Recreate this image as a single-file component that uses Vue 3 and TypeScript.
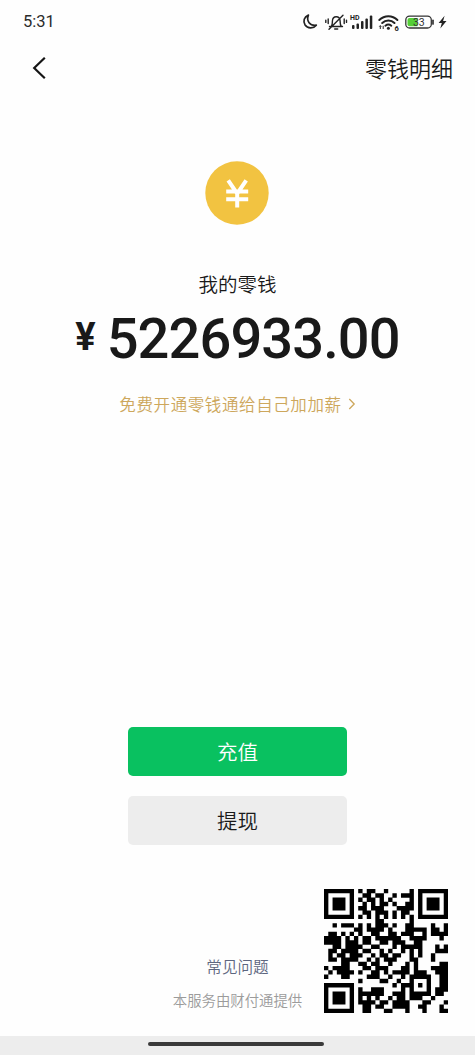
<script setup lang="ts">
const balance: string = '5226933.00'

// One string per module row; '#' is a dark module.
const qrRows: string[] = [
  '#######.#.##..#.....#.#######',
  '#.....#..##.##..#.###.#.....#',
  '#.###.#.#.##.#.#....#.#.###.#',
  '#.###.#..#.#.##.#..##.#.###.#',
  '#.###.#.##.###...####.#.###.#',
  '#.....#..##.###.#.##..#.....#',
  '#######.#.#.#.#.#.#.#.#######',
  '............##......#........',
  '..#.###.#.#.###.#..##....#..#',
  '.......##.####.#...#####.##.#',
  '.##.#.#.#..##..##.###..#.####',
  '####.#.#.##.######..####...#.',
  '####.###.##..##.###..##......',
  '..##.####..##...#.#####...#.#',
  '.##.####.##..#.#..#.#.#...###',
  '.#.##.###..#.##.##..#.#..#...',
  '.##.####..#.#.###...##...#...',
  '....##..##.##..#...#.#.....##',
  '#.####...##.###...##.#...####',
  '.#.####.#..##.#.####.###..###',
  '#...##....###..#..#.#####..##',
  '........#....##..#..#...#..##',
  '#######.........#.###.#.#..##',
  '#.....#.#..###....#.#...#.###',
  '#.###.#.######..###.#####.##.',
  '#.###.#.#.#.#..#.##.###..#...',
  '#.###.#.####.##.####...##...#',
  '#.....#..##.##..####..##...#.',
  '#######..##...##...#...#...##',
]

const qrPath: string = qrRows
  .map((row, y) =>
    Array.from(row)
      .map((cell, x) => (cell === '#' ? `M${x} ${y}h1.02v1.02h-1.02z` : ''))
      .join(''),
  )
  .join('')
</script>

<template>
  <div class="screen">
    <header class="status">
      <span class="time">5:31</span>
      <svg class="status-icons" width="150" height="22" viewBox="0 0 150 22" fill="none">
        <path d="M8.4 4.1C4 5.9 2.8 10.3 5.1 14c2.3 3.5 8.1 4.1 11.2.2C9.9 15 6 10 8.4 4.1Z" stroke="#222" stroke-width="1.7" stroke-linejoin="round" />
        <g stroke="#222" stroke-width="1.4" stroke-linecap="round">
          <path d="M29.5 15.5h13M31.5 15c1-1.6.8-3 .9-5 .3-5.7 7.3-5.7 7.7-.2.1 2.1 0 3.6 1 5.2M34.7 18h3M29 18.3 43 4.2M28.2 8v4.6M25.8 9.2v2.2M44.2 8v4.6M46.5 9.2v2.2" />
        </g>
        <text x="50" y="8.5" class="hd">HD</text>
        <g fill="#222">
          <rect x="52" y="14" width="2.5" height="4" rx="1" />
          <rect x="56.5" y="12.5" width="2.5" height="5.5" rx="1" />
          <rect x="61" y="10" width="2.5" height="8" rx="1" />
          <rect x="65.4" y="7.4" width="2.5" height="10.6" rx="1" />
          <rect x="69.8" y="4.5" width="2.5" height="13.5" rx="1" />
        </g>
        <g stroke="#222" stroke-width="2" stroke-linecap="round">
          <path d="M79.3 9c5.2-5.1 13-5.1 18.1 0M82.2 12c3.5-3.3 8.9-3.3 12.3 0M85.4 14.7c1.8-1.4 4.1-1.4 5.9 0" />
        </g>
        <circle cx="88.4" cy="17.2" r="1.5" fill="#222" />
        <path d="M80.3 18v-3.2m-1 .8 1-1 1 1M83.2 14.8V18" stroke="#222" stroke-width="1" />
        <text x="94.5" y="19.5" class="six">6</text>
        <rect x="105.8" y="5.2" width="25.5" height="11.8" rx="3.8" stroke="#333" stroke-width="1.3" />
        <path d="M109.5 7h8v8.2h-8a2 2 0 0 1-2-2V9a2 2 0 0 1 2-2Z" fill="#55cf37" />
        <path d="M133 9.3v3.6" stroke="#333" stroke-width="1.7" stroke-linecap="round" />
        <text x="118.8" y="15" text-anchor="middle" class="level">33</text>
        <path d="m144.6 4.7-6 7.3h3.2l-1.5 5.6 6.2-7.5h-3.4Z" fill="#222" />
      </svg>
    </header>

    <nav class="nav">
      <svg class="back" width="16" height="24" viewBox="0 0 16 24" fill="none">
        <path d="M12.8 1.8 2.2 12l10.6 10.2" stroke="#151515" stroke-width="2.2" />
      </svg>
      <span class="nav-title">零钱明细</span>
    </nav>

    <main class="content">
      <svg class="coin" width="64" height="64" viewBox="0 0 64 64" fill="none">
        <circle cx="32" cy="32" r="31.7" fill="#f2c341" />
        <path d="m23.2 19.3 9 13.3 9-13.3M32.2 31.5V46.5M21.2 30.6h22M21.2 38.2h22" stroke="#fff" stroke-width="4" />
      </svg>
      <div class="label">我的零钱</div>
      <div class="amount">
        <span class="yen">¥</span>
        <span class="value">{{ balance }}</span>
      </div>
      <div class="promo">
        <span>免费开通零钱通给自己加加薪</span>
        <svg width="8" height="12" viewBox="0 0 8 12" fill="none">
          <path d="m1.3 1 4.9 5-4.9 5" stroke="#cda75c" stroke-width="1.3" />
        </svg>
      </div>
    </main>

    <div class="actions">
      <button class="btn primary">充值</button>
      <button class="btn">提现</button>
    </div>

    <footer class="footer">
      <div class="faq">常见问题</div>
      <div class="provider">本服务由财付通提供</div>
      <svg class="qr" viewBox="0 0 29 29">
        <path :d="qrPath" fill="#000" />
      </svg>
    </footer>

    <div class="home"><div class="pill"></div></div>
  </div>
</template>

<style>
body {
  margin: 0;
  background: #fefefe;
}
</style>

<style scoped>
.screen {
  box-sizing: border-box;
  width: 475px;
  height: 1055px;
  display: flex;
  flex-direction: column;
  overflow: hidden;
  background: #fefefe;
  color: #191919;
  font-family: "Noto Sans CJK SC", sans-serif;
  font-weight: 350;
}
.status {
  height: 44px;
  display: flex;
  justify-content: space-between;
  align-items: center;
  padding: 0 25px 0 23px;
}
.time {
  font: 400 16.5px/20px Roboto, sans-serif;
  color: #2b2b2b;
}
.hd {
  font: 700 7px Roboto, sans-serif;
  fill: #222;
}
.six {
  font: 700 7.5px Roboto, sans-serif;
  fill: #222;
}
.level {
  font: 400 10.5px Roboto, sans-serif;
  fill: #333;
}
.nav {
  height: 48px;
  display: flex;
  justify-content: space-between;
  align-items: center;
  padding: 0 22px 0 32px;
}
.nav-title {
  margin-bottom: 2px;
  font-size: 22px;
  line-height: 30px;
}
.content {
  display: flex;
  flex-direction: column;
  align-items: center;
  padding-top: 69px;
}
.coin {
  display: block;
  margin-right: 1px;
}
.label {
  margin-top: 44px;
  font-size: 19.5px;
  line-height: 30px;
}
.amount {
  height: 60px;
  margin-top: 10px;
  display: flex;
  align-items: center;
  font-family: Roboto, sans-serif;
  line-height: 60px;
}
.yen {
  margin-right: 11px;
  font-size: 38px;
  font-weight: 700;
  line-height: 52px;
  height: 56px;
}
.value {
  font-size: 56px;
  font-weight: 500;
  letter-spacing: -0.9px;
}
.promo {
  margin-top: 21px;
  display: flex;
  align-items: center;
  gap: 6px;
  font-size: 16.5px;
  letter-spacing: 0.6px;
  line-height: 28px;
  color: #cda75c;
}
.actions {
  margin-top: 309px;
  display: flex;
  flex-direction: column;
  align-items: center;
  gap: 20px;
}
.btn {
  width: 219px;
  height: 49px;
  padding: 0;
  border: 0;
  border-radius: 5px;
  background: #ededed;
  color: #191919;
  font-family: inherit;
  font-weight: inherit;
  font-size: 20.5px;
  line-height: 49px;
}
.primary {
  background: #09c160;
  color: #fff;
}
.footer {
  position: relative;
  flex: 1;
  display: flex;
  flex-direction: column;
  align-items: center;
  padding-top: 108px;
}
.faq {
  font-size: 15.6px;
  line-height: 26px;
  color: #5d667f;
}
.provider {
  margin-top: 8px;
  font-size: 14.4px;
  line-height: 26px;
  color: #9b9b9b;
}
.qr {
  position: absolute;
  right: 27px;
  bottom: 23px;
  width: 124px;
  height: 124px;
}
.home {
  height: 19px;
  display: flex;
  justify-content: center;
  align-items: center;
  background: #ededed;
}
.pill {
  width: 176px;
  height: 4px;
  margin-bottom: 3px;
  margin-right: 3px;
  border-radius: 2px;
  background: #3a3a3a;
}
</style>
